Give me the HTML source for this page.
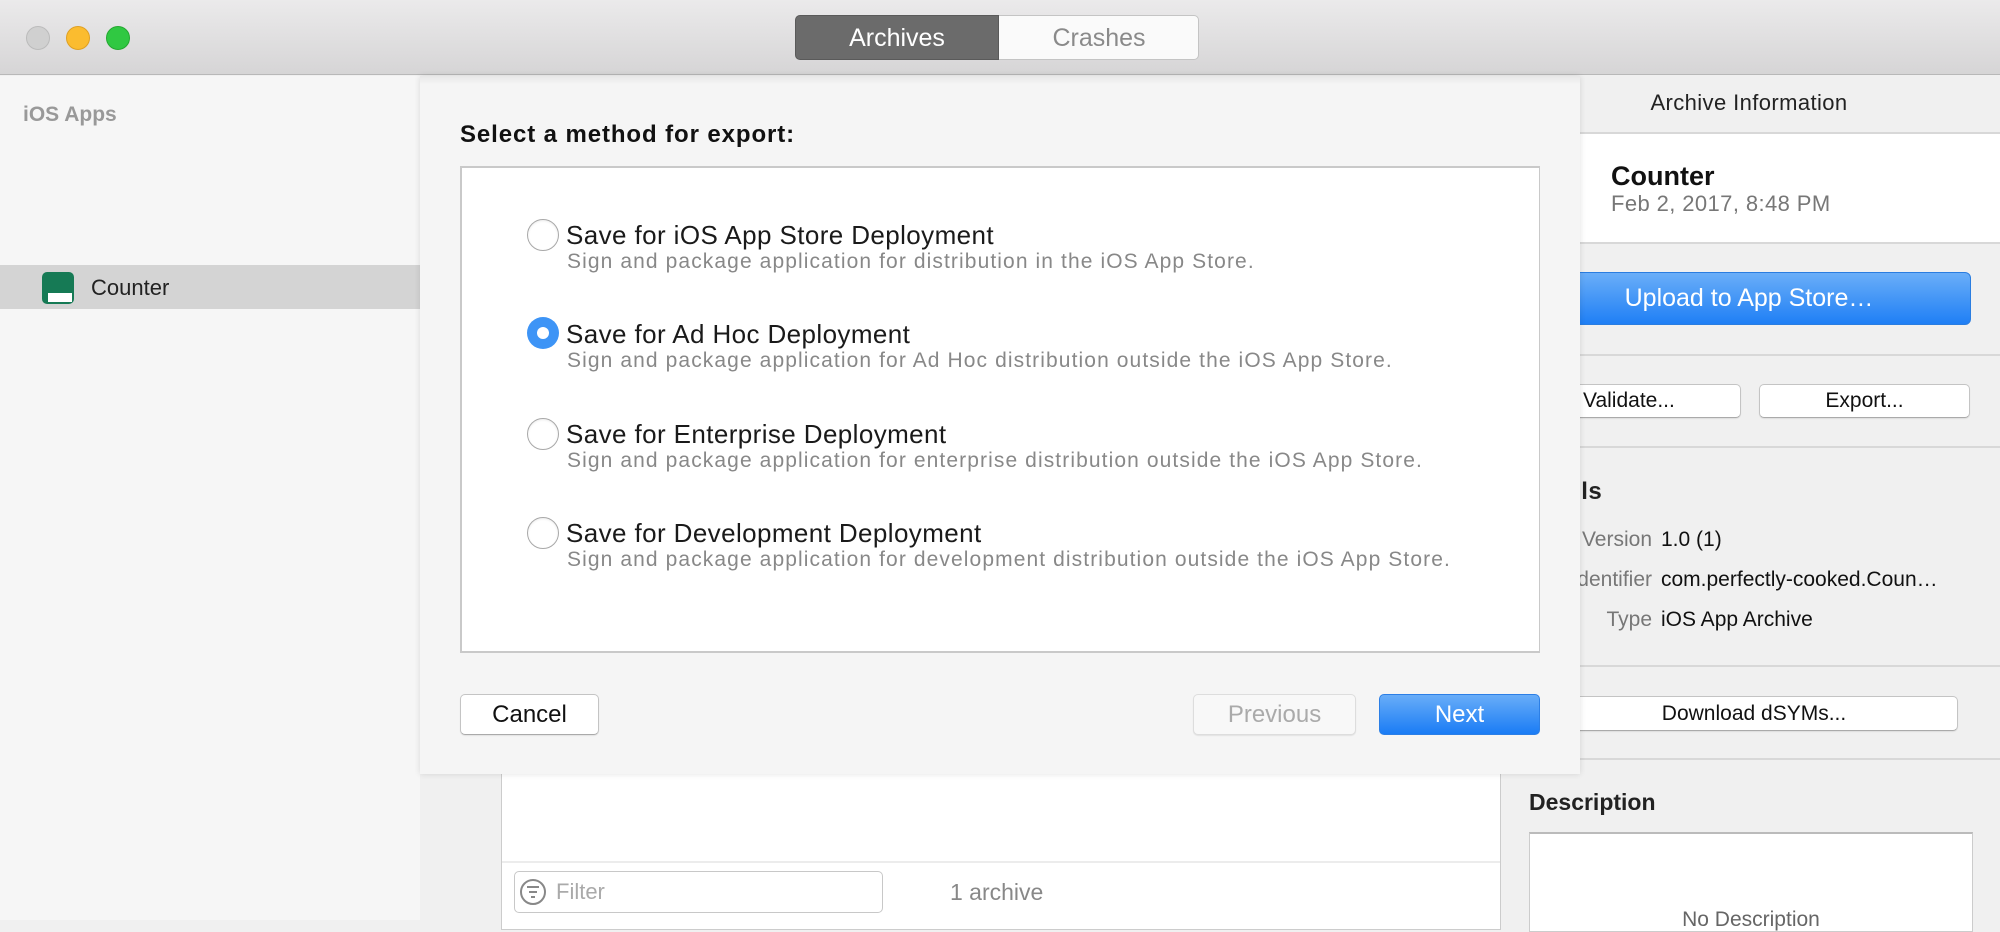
<!DOCTYPE html>
<html><head><meta charset="utf-8"><style>
*{margin:0;padding:0;box-sizing:border-box}
body{width:2000px;height:920px;overflow:hidden;position:relative;background:#f0f0f0;font-family:"Liberation Sans",sans-serif;}
.a{position:absolute}
.t{position:absolute;white-space:nowrap}
.btn{position:absolute;background:#fff;border:1px solid #c4c4c4;border-bottom-color:#aaa;border-radius:5px;text-align:center;color:#111;box-shadow:0 1px 1px rgba(0,0,0,.08)}
.radio{position:absolute;width:32px;height:32px;border-radius:50%;border:1px solid #a8a8a8;background:#fff;box-shadow:inset 0 1px 2px rgba(0,0,0,.08)}
.rt{position:absolute;font-size:26px;letter-spacing:0.4px;color:#1a1a1a;white-space:nowrap}
.rs{position:absolute;font-size:21px;letter-spacing:1.1px;color:#888;white-space:nowrap}
.hl{position:absolute;height:2px;background:#d8d8d8}
</style></head><body>
<!-- title bar -->
<div class="a" style="left:0;top:0;width:2000px;height:75px;background:linear-gradient(#ebeaeb,#d6d5d6);border-bottom:1px solid #b8b8b8"></div>
<div class="a" style="left:26px;top:26px;width:24px;height:24px;border-radius:50%;background:#d0d0d0;border:1px solid #bbb"></div>
<div class="a" style="left:66px;top:26px;width:24px;height:24px;border-radius:50%;background:#fbbc2f;border:1px solid #dfa023"></div>
<div class="a" style="left:106px;top:26px;width:24px;height:24px;border-radius:50%;background:#30c842;border:1px solid #24a830"></div>
<div class="a" style="left:795px;top:15px;width:404px;height:45px;border-radius:5px;background:#fafafa;border:1px solid #c4c4c4"></div>
<div class="a" style="left:795px;top:15px;width:204px;height:45px;border-radius:5px 0 0 5px;background:#6b6b6b;border:1px solid #5a5a5a"></div>
<div class="t" style="left:795px;top:24px;width:204px;text-align:center;font-size:25px;color:#fff">Archives</div>
<div class="t" style="left:999px;top:24px;width:200px;text-align:center;font-size:25px;color:#8a8a8a">Crashes</div>

<!-- sidebar -->
<div class="a" style="left:0;top:76px;width:420px;height:844px;background:#f6f6f6"></div>
<div class="t" style="left:23px;top:103px;font-size:21px;font-weight:bold;color:#999">iOS Apps</div>
<div class="a" style="left:0;top:265px;width:420px;height:44px;background:#d4d4d4"></div>
<div class="a" style="left:42px;top:272px;width:32px;height:32px;border-radius:5px;background:#167a55"></div>
<div class="a" style="left:48px;top:293px;width:24px;height:9px;background:#fff"></div>
<div class="t" style="left:91px;top:275px;font-size:22px;color:#222">Counter</div>

<!-- center list -->
<div class="a" style="left:501px;top:700px;width:1000px;height:230px;background:#fff;border:1px solid #ccc"></div>
<div class="a" style="left:502px;top:861px;width:998px;height:2px;background:#ececec"></div>
<div class="a" style="left:514px;top:871px;width:369px;height:42px;background:#fff;border:1px solid #c8c8c8;border-radius:5px"></div>
<div class="a" style="left:520px;top:879px;width:26px;height:26px;border-radius:50%;border:2px solid #888"></div>
<div class="a" style="left:527px;top:886px;width:12px;height:2px;background:#888"></div>
<div class="a" style="left:529px;top:891px;width:8px;height:2px;background:#888"></div>
<div class="a" style="left:531px;top:896px;width:4px;height:2px;background:#888"></div>
<div class="t" style="left:556px;top:879px;font-size:22px;color:#aaa">Filter</div>
<div class="t" style="left:950px;top:879px;font-size:23px;color:#888">1 archive</div>

<!-- right panel -->
<div class="a" style="left:1511px;top:76px;width:489px;height:844px;background:#f0f0f0"></div>
<div class="t" style="left:1511px;top:90px;width:476px;text-align:center;font-size:22px;letter-spacing:0.4px;color:#222">Archive Information</div>
<div class="hl" style="left:1511px;top:132px;width:489px"></div>
<div class="a" style="left:1511px;top:134px;width:489px;height:109px;background:#fff"></div>
<div class="hl" style="left:1511px;top:242px;width:489px"></div>
<div class="t" style="left:1611px;top:161px;font-size:27px;font-weight:bold;color:#111">Counter</div>
<div class="t" style="left:1611px;top:191px;font-size:22px;letter-spacing:0.4px;color:#777">Feb 2, 2017, 8:48 PM</div>
<div class="a" style="left:1560px;top:272px;width:411px;height:53px;border-radius:6px;background:linear-gradient(#6aaef8,#1f7ff5);border:1px solid #2a7de0"></div>
<div class="t" style="left:1560px;top:284px;width:378px;text-align:center;font-size:25px;color:#fff">Upload to App Store…</div>
<div class="hl" style="left:1511px;top:354px;width:489px"></div>
<div class="btn" style="left:1560px;top:384px;width:181px;height:34px;font-size:21px;line-height:32px;text-align:left;padding-left:22px">Validate...</div>
<div class="btn" style="left:1759px;top:384px;width:211px;height:34px;font-size:21px;line-height:32px">Export...</div>
<div class="hl" style="left:1511px;top:446px;width:489px"></div>
<div class="t" style="left:1520px;top:478px;font-size:24px;font-weight:bold;color:#222;letter-spacing:0.5px">Details</div>
<div class="t" style="left:1500px;top:528px;width:152px;text-align:right;font-size:21px;color:#777">Version</div>
<div class="t" style="left:1661px;top:528px;font-size:21px;color:#111">1.0 (1)</div>
<div class="t" style="left:1500px;top:568px;width:152px;text-align:right;font-size:21px;color:#777">Identifier</div>
<div class="t" style="left:1661px;top:568px;font-size:21px;color:#111">com.perfectly-cooked.Coun…</div>
<div class="t" style="left:1500px;top:608px;width:152px;text-align:right;font-size:21px;color:#777">Type</div>
<div class="t" style="left:1661px;top:608px;font-size:21px;color:#111">iOS App Archive</div>
<div class="hl" style="left:1511px;top:665px;width:489px"></div>
<div class="btn" style="left:1540px;top:696px;width:418px;height:35px;font-size:21px;line-height:33px;padding-left:10px">Download dSYMs...</div>
<div class="hl" style="left:1511px;top:758px;width:489px"></div>
<div class="t" style="left:1529px;top:789px;font-size:23px;font-weight:bold;color:#222">Description</div>
<div class="a" style="left:1529px;top:832px;width:444px;height:100px;background:#fff;border:1px solid #ccc;border-top:2px solid #bbb"></div>
<div class="t" style="left:1529px;top:908px;width:444px;text-align:center;font-size:21px;color:#666">No Description</div>

<!-- sheet -->
<div class="a" style="left:420px;top:76px;width:1160px;height:698px;background:#f5f5f5;box-shadow:0 0 6px rgba(0,0,0,.12)"></div>
<div class="a" style="left:420px;top:76px;width:1160px;height:8px;background:linear-gradient(rgba(0,0,0,.06),rgba(0,0,0,0))"></div>
<div class="t" style="left:460px;top:121px;font-size:24px;letter-spacing:0.9px;font-weight:bold;color:#111">Select a method for export:</div>
<div class="a" style="left:460px;top:166px;width:1080px;height:487px;background:#fff;border:2px solid #c9c9c9;border-right-width:1px"></div>

<div class="radio" style="left:527px;top:219px"></div>
<div class="rt" style="left:566px;top:220px">Save for iOS App Store Deployment</div>
<div class="rs" style="left:567px;top:250px">Sign and package application for distribution in the iOS App Store.</div>

<div class="a" style="left:527px;top:317px;width:32px;height:32px;border-radius:50%;background:#3d94f6"></div>
<div class="a" style="left:537px;top:327px;width:12px;height:12px;border-radius:50%;background:#fff"></div>
<div class="rt" style="left:566px;top:319px">Save for Ad Hoc Deployment</div>
<div class="rs" style="left:567px;top:349px">Sign and package application for Ad Hoc distribution outside the iOS App Store.</div>

<div class="radio" style="left:527px;top:418px"></div>
<div class="rt" style="left:566px;top:419px">Save for Enterprise Deployment</div>
<div class="rs" style="left:567px;top:449px">Sign and package application for enterprise distribution outside the iOS App Store.</div>

<div class="radio" style="left:527px;top:517px"></div>
<div class="rt" style="left:566px;top:518px">Save for Development Deployment</div>
<div class="rs" style="left:567px;top:548px">Sign and package application for development distribution outside the iOS App Store.</div>

<div class="btn" style="left:460px;top:694px;width:139px;height:41px;font-size:24px;line-height:39px">Cancel</div>
<div class="btn" style="left:1193px;top:694px;width:163px;height:41px;font-size:24px;line-height:39px;color:#aaa;background:#f8f8f8;border-color:#ddd">Previous</div>
<div class="a" style="left:1379px;top:694px;width:161px;height:41px;border-radius:5px;background:linear-gradient(#68adf8,#1a7cf5);border:1px solid #2c7fe6;color:#fff;font-size:24px;line-height:39px;text-align:center">Next</div>
</body></html>
